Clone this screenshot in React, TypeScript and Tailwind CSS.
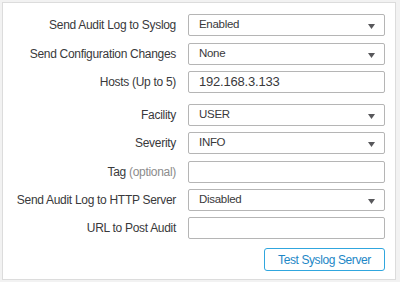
import React from "react";

const Arrow = () => (
  <svg width="7" height="5" viewBox="0 0 7 5" className="absolute right-[9px] top-1/2 -translate-y-[1px]">
    <path d="M0 0 H7 L3.5 5 Z" fill="#58585b" />
  </svg>
);

type Row = { label: React.ReactNode; value?: string; select?: boolean; mt: string };

const rows: Row[] = [
  { label: "Send Audit Log to Syslog", value: "Enabled", select: true, mt: "mt-0" },
  { label: "Send Configuration Changes", value: "None", select: true, mt: "mt-[7px]" },
  { label: "Hosts (Up to 5)", value: "192.168.3.133", mt: "mt-[6px]" },
  { label: "Facility", value: "USER", select: true, mt: "mt-[11px]" },
  { label: "Severity", value: "INFO", select: true, mt: "mt-[6px]" },
  {
    label: (
      <>
        Tag <span className="text-[#8c8c8c]">(optional)</span>
      </>
    ),
    value: "",
    mt: "mt-[7px]",
  },
  { label: "Send Audit Log to HTTP Server", value: "Disabled", select: true, mt: "mt-[6px]" },
  { label: "URL to Post Audit", value: "", mt: "mt-[6px]" },
];

export default function App() {
  return (
    <div
      className="w-[400px] h-[282px] bg-[#f2f2f2] p-[2px] pr-[4px] pb-[2px]"
      style={{ fontFamily: '"Liberation Sans", Arial, sans-serif' }}
    >
      <div className="h-full border border-[#dcdcdc] bg-white pt-[11px] pr-[10px]">
        {rows.map((r, i) => (
          <div key={i} className={`flex items-center h-[22px] ${r.mt}`}>
            <div className="w-[173px] shrink-0 text-right text-[12px] tracking-[-0.3px] text-[#39393b]">{r.label}</div>
            <div
              className={`ml-[12px] relative flex-1 h-[22px] border border-[#b5b5b5] rounded-[2px] flex items-center pl-[10px] text-[#39393b] ${
                r.select ? "text-[11.5px] tracking-[-0.3px]" : "text-[13px] tracking-[-0.2px]"
              }`}
            >
              {r.value}
              {r.select && <Arrow />}
            </div>
          </div>
        ))}
        <div className="flex justify-end mt-[9px]">
          <button className="w-[121px] h-[23px] border border-[#30a6de] rounded-[3px] text-[12px] tracking-[-0.4px] text-[#1d87c6] bg-white">
            Test Syslog Server
          </button>
        </div>
      </div>
    </div>
  );
}
